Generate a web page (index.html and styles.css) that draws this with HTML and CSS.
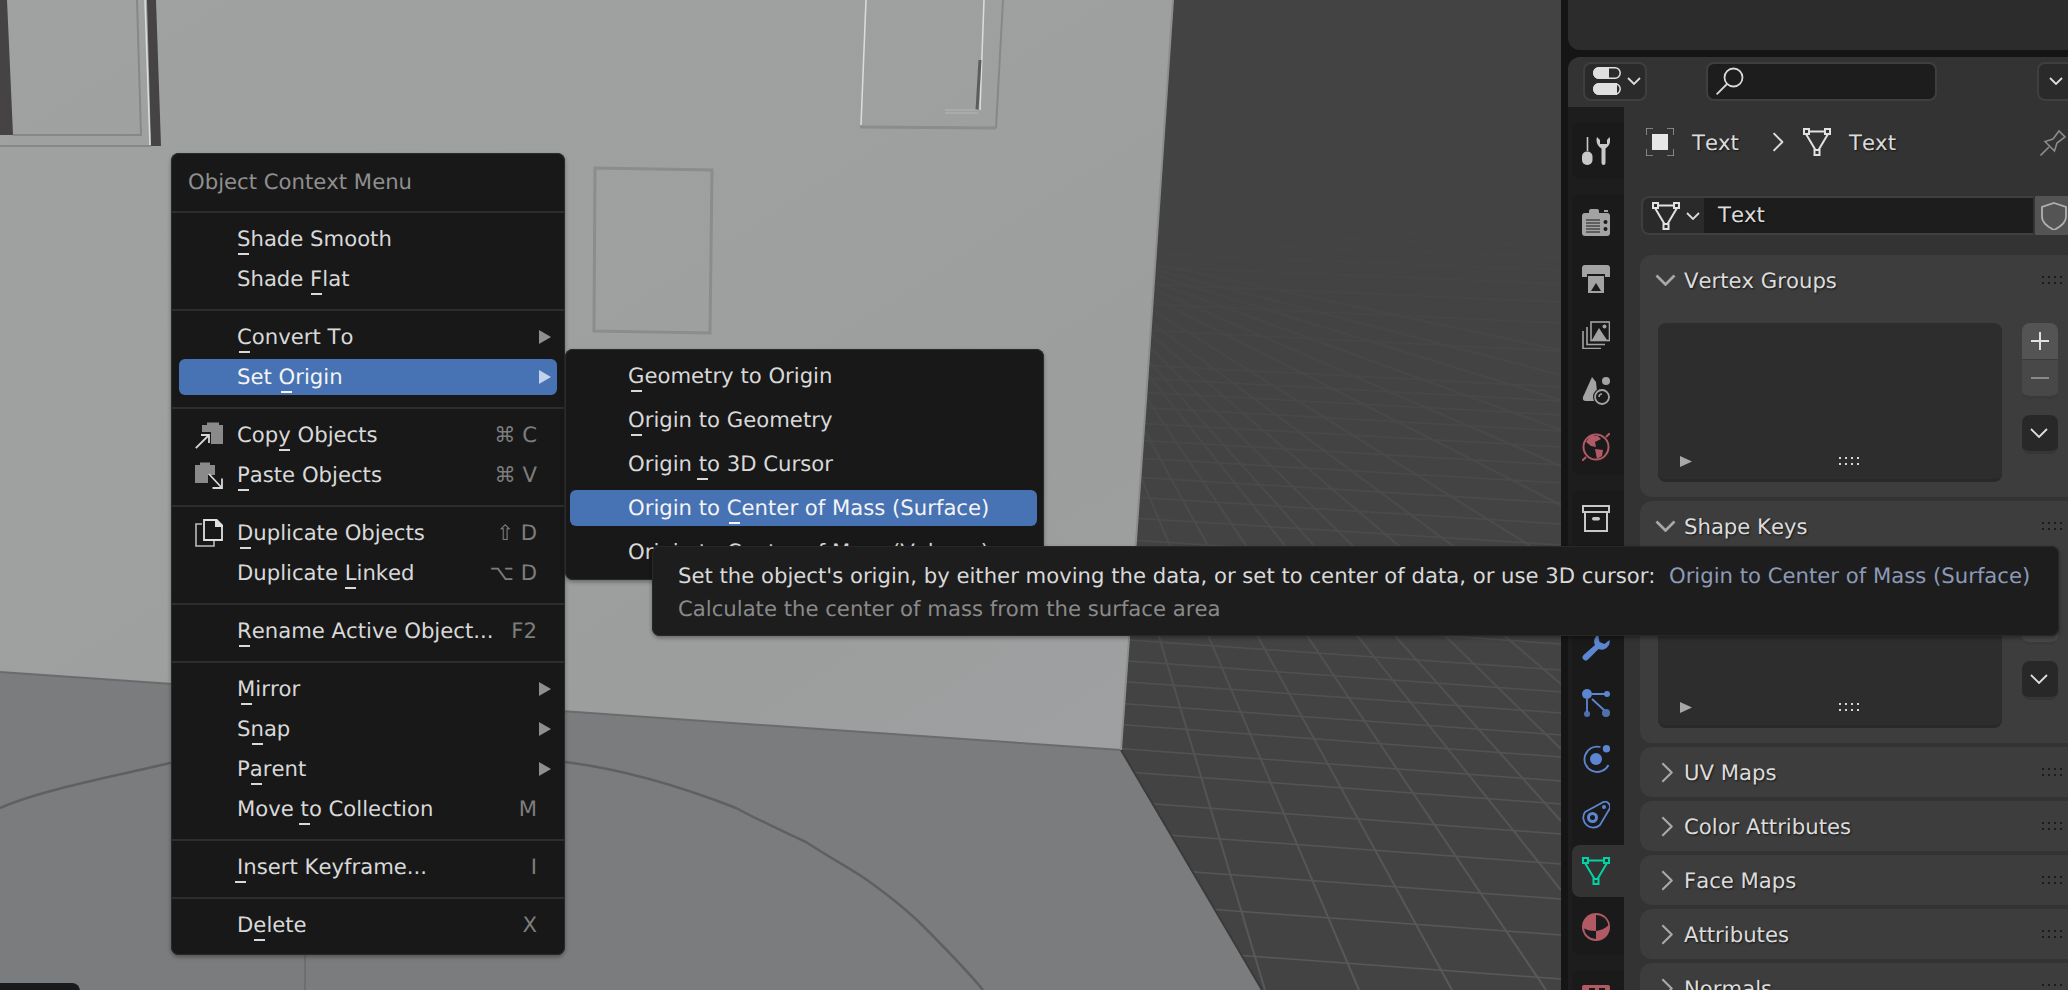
FILE: index.html
```html
<!DOCTYPE html>
<html lang="en">
<head>
<meta charset="utf-8">
<title>Blender context menu</title>
<link rel="stylesheet" href="styles.css">
</head>
<body>
<svg class="sprite" xmlns="http://www.w3.org/2000/svg">
  <symbol id="mesh" viewBox="0 0 28 28"><g fill="none" stroke="currentColor" stroke-width="2"><rect x="1" y="1" width="5" height="5"/><rect x="22" y="1" width="5" height="5"/><rect x="11.5" y="22" width="5" height="5"/><path d="M6 3.5H22M3 6l9.500 16M25 6l-9.500 16"/></g></symbol>
  <symbol id="chev-d" viewBox="0 0 14 8"><path d="M1 1l6 6 6-6" fill="none" stroke="currentColor" stroke-width="1.800"/></symbol>
  <symbol id="chev-r" viewBox="0 0 10 18"><path d="M1 1l8 8-8 8" fill="none" stroke="currentColor" stroke-width="1.800"/></symbol>
  <symbol id="tri" viewBox="0 0 12 14"><path d="M0 0l12 7-12 7z" fill="currentColor"/></symbol>
  <symbol id="grip" viewBox="0 0 20 9"><path d="M0 0h2v2H0zM6 0h2v2H6zM12 0h2v2h-2zM18 0h2v2h-2zM0 6h2v2H0zM6 6h2v2H6zM12 6h2v2h-2zM18 6h2v2h-2z" fill="currentColor"/></symbol>
</svg>

<div class="app">
  <div class="viewport">
    <svg class="scene" viewBox="0 0 1561 990" xmlns="http://www.w3.org/2000/svg">
      <defs>
        <linearGradient id="wallg" x1="0" y1="0" x2="1" y2="1">
          <stop offset="0" stop-color="#a0a2a2"/><stop offset="0.5" stop-color="#9ea0a0"/><stop offset="0.75" stop-color="#9c9e9e"/><stop offset="1" stop-color="#9fa0a1"/>
        </linearGradient>
        <linearGradient id="gridg" gradientUnits="userSpaceOnUse" x1="0" y1="180" x2="0" y2="990">
          <stop offset="0" stop-color="#434343"/><stop offset="0.3" stop-color="#484848"/><stop offset="0.6" stop-color="#505050"/><stop offset="1" stop-color="#595959"/>
        </linearGradient>
      </defs>
      <rect class="sky" width="1561" height="990"/>
      <path class="grid minor" d="M1100 170L1561 178M1100 175L1561 184M1100 180L1561 190M1100 186L1561 196M1100 192L1561 203M1100 198L1561 210M1100 205L1561 218M1100 213L1561 226M1100 222L1561 238M1100 230L1561 246M1100 240L1561 257M1100 252L1561 270M1100 265L1561 284M1100 282L1561 302M1100 302L1561 323M1100 328L1561 351M1100 363L1561 387M1100 376L1561 401M1100 390L1561 415M1100 405L1561 431M1100 421L1561 447M1100 438L1561 465M1100 456L1561 483M1100 475L1561 503M1100 495L1561 524M1100 516L1561 545M1100 538L1561 568M1100 561L1561 591M1100 585L1561 616M1100 612L1561 644M1100 638L1561 670M1100 659L1561 692M1100 680L1561 713M1100 702L1561 735M1100 723L1561 757M1100 747L1561 781M1100 770L1561 804M1100 800L1561 834M1100 830L1561 864M1100 865L1561 899M1100 901L1561 935M1100 945L1561 979"/>
      <path class="grid" d="M1040 240L1265 990M1040 240L1359 990M1040 240L1452 990M1040 240L1546 990M1040 240L1561 890M1040 240L1561 821M1040 240L1561 749M1040 240L1561 684M1040 240L1561 626M1040 240L1561 565M1040 240L1561 505M1040 240L1561 466M1040 240L1561 430M1040 240L1561 400M1040 240L1561 375M1040 240L1561 350"/>
      <polygon class="floor" points="0,672 1121,750 1262,990 0,990"/>
      <polygon class="wall" points="0,0 1173,0 1146,400 1121,750 0,672"/>
      <path class="wall-edge" d="M0 672L1121 750"/>
      <path class="floor-edge" d="M1121 750L1262 990"/>
      <path class="wall-side" d="M1173 0L1146 400 1121 750"/>
      <path class="arc" d="M0 808C40 790 120 775 170 763L565 762C630 770 690 790 736 808C762 822 785 832 806 842C830 858 850 868 867 880C888 895 905 908 922 925C945 948 965 968 983 990"/>
      <path class="arc thin" d="M305 955V990"/>
      <polygon class="frame-dark" points="0,0 7,0 13,135 0,135"/>
      <polygon class="frame-dark" points="147,0 156,0 161,146 151,146"/>
      <path class="frame-white" d="M145 0L150 146"/>
      <path class="frame-line" d="M137 0L141 135 13 135M0 146L151 146"/>
      <path class="frame-line thick" d="M595 168L712 170 710 333 594 331Z"/>
      <path class="frame-line" d="M1003 0L996 128"/>
      <path class="frame-line thick" d="M996 128L860 127"/>
      <path class="frame-white" d="M866 0L861 125"/>
      <path class="frame-white" d="M984 0L980 110"/>
      <path class="frame-deep" d="M980 60L977 110"/>
      <path class="frame-soft" d="M945 110H978M945 113H978"/>
      <rect class="corner-box" x="-10" y="983" width="90" height="20" rx="8"/>
    </svg>
  </div>

  <aside class="side">
    <div class="outliner"></div>
    <section class="props">
      <header class="props-head">
        <div class="btn mode">
          <svg class="i28" viewBox="0 0 28 28"><g fill="none" stroke="#e0e0e0" stroke-width="1.500"><rect x=".8" y=".8" width="26.400" height="10.400" rx="5.200"/><rect x=".8" y="16.800" width="26.400" height="10.400" rx="5.200"/></g><path d="M6 0h10v12H6a6 6 0 0 1 0-12zM6 16h18v12H6a6 6 0 0 1 0-12z" fill="#e0e0e0"/></svg>
          <svg class="chev" viewBox="0 0 14 8"><use href="#chev-d"/></svg>
        </div>
        <div class="btn search">
          <svg class="i28" viewBox="0 0 28 28"><g fill="none" stroke="#d8d8d8" stroke-width="1.800"><circle cx="17.500" cy="10.500" r="9"/><path d="M.6 27.400L11 17"/></g></svg>
        </div>
        <div class="btn opts"><svg class="chev" viewBox="0 0 14 8"><use href="#chev-d"/></svg></div>
      </header>
      <div class="props-body">
        <nav class="tabs">
          <div class="tab-group">
            <div class="tab c-light"><svg class="i28" viewBox="0 0 28 28"><path d="M5.500 0v14" stroke="currentColor" stroke-width="1.600"/><rect y="14.500" width="10.500" height="13.500" rx="5" fill="currentColor"/><path d="M15 0C13.500 5 15.500 9 19.500 11.500V26a2 2 0 0 0 4 0V11.500C27.500 9 29 5 27.500 0L25 3V7H18V3Z" fill="currentColor"/></svg></div>
          </div>
          <div class="tab-group">
            <div class="tab c-gray"><svg class="i28" viewBox="0 0 28 28"><rect y="4" width="28" height="23" rx="3" fill="currentColor"/><rect x="7" y="0" width="10" height="7" rx="2" fill="currentColor"/><rect x="22" y="1" width="4" height="2" fill="currentColor"/><path d="M4 11h14M4 14h14M4 17h14M4 20h14M4 23h14" stroke="#1b1b1b" stroke-width="1.200"/><circle cx="23.500" cy="13" r="2" fill="#1b1b1b"/><circle cx="23.500" cy="20" r="2" fill="#1b1b1b"/></svg></div>
            <div class="tab c-gray"><svg class="i28" viewBox="0 0 28 28"><path d="M3 0h22a3 3 0 0 1 3 3v9h-5V9H5v3H0V3a3 3 0 0 1 3-3z" fill="currentColor"/><path d="M6 11h16v17H6z" fill="currentColor"/><path d="M9 26l5-8 5 8z" fill="#1b1b1b"/></svg></div>
            <div class="tab c-gray"><svg class="i28" viewBox="0 0 28 28"><g fill="none" stroke="currentColor" stroke-width="1.600"><rect x="9" y="1" width="18.500" height="18.500"/><path d="M5 6V23.500H23M1 10V27.500H19"/></g><path d="M10 19l7-12 8 12z" fill="currentColor"/><circle cx="22.500" cy="5.500" r="2" fill="currentColor"/></svg></div>
            <div class="tab c-gray"><svg class="i28" viewBox="0 0 28 28"><path d="M10 0L1 20Q0 24 4 24L16 24 14 5Z" fill="currentColor"/><circle cx="24" cy="4" r="4" fill="currentColor"/><circle cx="20" cy="20" r="9" fill="#1b1b1b"/><circle cx="20" cy="20" r="7" fill="none" stroke="currentColor" stroke-width="1.800"/><path d="M17 20a3 3 0 0 1 3-3" fill="none" stroke="currentColor" stroke-width="1.500"/></svg></div>
            <div class="tab c-red"><svg class="i28" viewBox="0 0 28 28"><circle cx="14" cy="14" r="12.500" fill="none" stroke="currentColor" stroke-width="2"/><path d="M0 28l4-4M24 4l4-4" stroke="currentColor" stroke-width="2"/><path d="M8 3h8l3 3-6 3 1 5-5-1-5-4zM13 16l8 1-1 6-5 3z" fill="currentColor"/></svg></div>
          </div>
          <div class="tab-group">
            <div class="tab c-light"><svg class="i28" viewBox="0 0 28 28"><g fill="none" stroke="currentColor" stroke-width="2"><rect x="1" y="1" width="26" height="6"/><path d="M3 7V26H25V7"/></g><rect x="10" y="12" width="8" height="3.500" rx="1.700" fill="currentColor"/></svg></div>
          </div>
          <div class="tab-group">
            <div class="tab c-gray"></div>
            <div class="tab c-blue"><svg class="i28" viewBox="0 0 28 28"><path d="M17 1a8 8 0 0 0-4 11L1.500 22a3 3 0 0 0 4.500 4.500L16.500 16a8 8 0 0 0 11-9l-5 4-5-2-1-5z" fill="currentColor"/></svg></div>
            <div class="tab c-blue"><svg class="i28" viewBox="0 0 28 28"><circle cx="5" cy="5" r="5" fill="currentColor"/><circle cx="25" cy="5" r="3" fill="currentColor"/><circle cx="5" cy="25" r="3" fill="currentColor" opacity=".8"/><circle cx="24" cy="24" r="4" fill="currentColor" opacity=".8"/><path d="M10 5H23M5 10V23M10 10L22 21" stroke="currentColor" stroke-width="1.800"/></svg></div>
            <div class="tab c-blue"><svg class="i28" viewBox="0 0 28 28"><circle cx="14" cy="14" r="6" fill="currentColor"/><circle cx="24.500" cy="3.700" r="3.700" fill="currentColor"/><path d="M18.500 2A12.700 12.700 0 1 0 26.500 20" fill="none" stroke="currentColor" stroke-width="1.800"/></svg></div>
            <div class="tab c-blue"><svg class="i28" viewBox="0 0 28 28"><path d="M3 11L20 1.800a5 5 0 0 1 7 7L18 24a10 10 0 0 1-15-13z" fill="none" stroke="currentColor" stroke-width="1.800"/><circle cx="10.500" cy="16.500" r="4" fill="none" stroke="currentColor" stroke-width="3"/><circle cx="22" cy="6" r="2" fill="currentColor"/></svg></div>
            <div class="tab tab-active c-green"><svg class="i28" viewBox="0 0 28 28"><use href="#mesh"/></svg></div>
            <div class="tab c-red"><svg class="i28" viewBox="0 0 28 28"><circle cx="14" cy="14" r="14" fill="currentColor"/><path d="M14 2A12 12 0 0 1 26.300 12.500Q21 17 14 18ZM2 15.500Q7 18 14 18V26A12 12 0 0 1 2 15.500Z" fill="#1b1b1b"/></svg></div>
          </div>
          <div class="tab-group">
            <div class="tab c-red"><svg class="i28" viewBox="0 0 28 28"><rect width="28" height="28" rx="2" fill="currentColor"/><path d="M7 3h6v6H7zM17 3h6v6h-6z" fill="#1b1b1b"/></svg></div>
          </div>
        </nav>
        <div class="content">
          <div class="crumbs">
            <svg class="i28" viewBox="0 0 28 28"><path d="M0 7V0h7M21 0h7v7M28 21v7h-7M7 28H0v-7" fill="none" stroke="#9a9a9a" stroke-width="1.600"/><rect x="6" y="6" width="16" height="16" fill="#e6e6e6"/></svg>
            <span class="txt crumb-a">Text</span>
            <svg class="crumb-chev" viewBox="0 0 10 18"><use href="#chev-r"/></svg>
            <svg class="i28 mesh-w" viewBox="0 0 28 28"><use href="#mesh"/></svg>
            <span class="txt crumb-b">Text</span>
            <svg class="i28 pin" viewBox="0 0 28 28"><path d="M.5 27.500L9 19M5 13.500L14.500 23 17 15 25 9 19 3 13 11z" fill="none" stroke="#8c8c8c" stroke-width="1.600"/></svg>
          </div>
          <div class="datarow">
            <div class="db-pick">
              <svg class="i28 mesh-w" viewBox="0 0 28 28"><use href="#mesh"/></svg>
              <svg class="chev" viewBox="0 0 14 8"><use href="#chev-d"/></svg>
            </div>
            <div class="db-name txt">Text</div>
            <div class="db-shield"><svg class="i28" viewBox="0 0 28 28"><path d="M14 1L26 5V15C26 21 20 25 14 28 8 25 2 21 2 15V5Z" fill="none" stroke="#b0b0b0" stroke-width="1.800"/></svg></div>
          </div>

          <section class="panel open">
            <div class="panel-head">
              <svg class="pc-d" viewBox="0 0 14 8"><use href="#chev-d"/></svg>
              <span class="txt">Vertex Groups</span>
              <svg class="p-grip" viewBox="0 0 20 9"><use href="#grip"/></svg>
            </div>
            <div class="panel-body">
              <div class="list">
                <svg class="list-tri" viewBox="0 0 12 14" preserveAspectRatio="none"><use href="#tri"/></svg>
                <svg class="list-grip" viewBox="0 0 20 9"><use href="#grip"/></svg>
              </div>
              <div class="side-btns">
                <div class="pm plus"><svg viewBox="0 0 18 18" class="pm-i"><path d="M9 0v18M0 9h18" stroke="#e0e0e0" stroke-width="2"/></svg></div>
                <div class="pm minus"><svg viewBox="0 0 18 18" class="pm-i"><path d="M0 9h18" stroke="#8a8a8a" stroke-width="2"/></svg></div>
                <div class="menu-btn"><svg viewBox="0 0 18 10" class="mb-i"><path d="M1 1l8 8 8-8" fill="none" stroke="#e0e0e0" stroke-width="1.800"/></svg></div>
              </div>
            </div>
          </section>

          <section class="panel open">
            <div class="panel-head">
              <svg class="pc-d" viewBox="0 0 14 8"><use href="#chev-d"/></svg>
              <span class="txt">Shape Keys</span>
              <svg class="p-grip" viewBox="0 0 20 9"><use href="#grip"/></svg>
            </div>
            <div class="panel-body">
              <div class="list">
                <svg class="list-tri" viewBox="0 0 12 14" preserveAspectRatio="none"><use href="#tri"/></svg>
                <svg class="list-grip" viewBox="0 0 20 9"><use href="#grip"/></svg>
              </div>
              <div class="side-btns">
                <div class="pm plus"></div>
                <div class="pm minus"></div>
                <div class="menu-btn"><svg viewBox="0 0 18 10" class="mb-i"><path d="M1 1l8 8 8-8" fill="none" stroke="#e0e0e0" stroke-width="1.800"/></svg></div>
              </div>
            </div>
          </section>

          <section class="panel"><div class="panel-head"><svg class="pc-r" viewBox="0 0 10 18"><use href="#chev-r"/></svg><span class="txt">UV Maps</span><svg class="p-grip" viewBox="0 0 20 9"><use href="#grip"/></svg></div></section>
          <section class="panel"><div class="panel-head"><svg class="pc-r" viewBox="0 0 10 18"><use href="#chev-r"/></svg><span class="txt">Color Attributes</span><svg class="p-grip" viewBox="0 0 20 9"><use href="#grip"/></svg></div></section>
          <section class="panel"><div class="panel-head"><svg class="pc-r" viewBox="0 0 10 18"><use href="#chev-r"/></svg><span class="txt">Face Maps</span><svg class="p-grip" viewBox="0 0 20 9"><use href="#grip"/></svg></div></section>
          <section class="panel"><div class="panel-head"><svg class="pc-r" viewBox="0 0 10 18"><use href="#chev-r"/></svg><span class="txt">Attributes</span><svg class="p-grip" viewBox="0 0 20 9"><use href="#grip"/></svg></div></section>
          <section class="panel"><div class="panel-head"><svg class="pc-r" viewBox="0 0 10 18"><use href="#chev-r"/></svg><span class="txt">Normals</span><svg class="p-grip" viewBox="0 0 20 9"><use href="#grip"/></svg></div></section>
        </div>
      </div>
    </section>
  </aside>
</div>

<div class="menu main-menu">
  <div class="menu-title">Object Context Menu</div>
  <div class="sep"></div>
  <div class="group">
    <div class="item"><span class="ico"></span><span class="label"><span class="k">S</span>hade Smooth</span></div>
    <div class="item"><span class="ico"></span><span class="label">Shade <span class="k">F</span>lat</span></div>
  </div>
  <div class="sep"></div>
  <div class="group">
    <div class="item"><span class="ico"></span><span class="label"><span class="k">C</span>onvert To</span><svg class="arrow" viewBox="0 0 12 14"><use href="#tri"/></svg></div>
    <div class="item hi"><span class="ico"></span><span class="label">Set <span class="k">O</span>rigin</span><svg class="arrow" viewBox="0 0 12 14"><use href="#tri"/></svg></div>
  </div>
  <div class="sep"></div>
  <div class="group">
    <div class="item"><span class="ico"><svg class="i28" viewBox="0 0 28 28"><path d="M7 4H12V1.500H24V4H28V23H16V11H7Z" fill="#8a8a8a"/><path d="M.8 27.200L13.500 14.500M6 14H14V22" fill="none" stroke="#d8d8d8" stroke-width="1.800"/></svg></span><span class="label">Cop<span class="k">y</span> Objects</span><span class="sc">⌘ C</span></div>
    <div class="item"><span class="ico"><svg class="i28" viewBox="0 0 28 28"><path d="M0 4H5V1.500H15V4H20V14H13V22H0Z" fill="#8a8a8a"/><path d="M14 13L27 27M27 17.500V27H17.500" fill="none" stroke="#d8d8d8" stroke-width="1.800"/></svg></span><span class="label"><span class="k">P</span>aste Objects</span><span class="sc">⌘ V</span></div>
  </div>
  <div class="sep"></div>
  <div class="group">
    <div class="item"><span class="ico"><svg class="i28" viewBox="0 0 28 28"><path d="M7 5H1v22h18v-5" fill="none" stroke="#bcbcbc" stroke-width="1.600"/><path d="M9 1h12l6 6v14H9z" fill="none" stroke="#e0e0e0" stroke-width="1.800"/><path d="M20 0h2l6 6v2h-8z" fill="#e0e0e0"/></svg></span><span class="label"><span class="k">D</span>uplicate Objects</span><span class="sc">⇧ D</span></div>
    <div class="item"><span class="ico"></span><span class="label">Duplicate <span class="k">L</span>inked</span><span class="sc">⌥ D</span></div>
  </div>
  <div class="sep"></div>
  <div class="group">
    <div class="item"><span class="ico"></span><span class="label"><span class="k">R</span>ename Active Object...</span><span class="sc">F2</span></div>
  </div>
  <div class="sep"></div>
  <div class="group">
    <div class="item"><span class="ico"></span><span class="label"><span class="k">M</span>irror</span><svg class="arrow" viewBox="0 0 12 14"><use href="#tri"/></svg></div>
    <div class="item"><span class="ico"></span><span class="label">S<span class="k">n</span>ap</span><svg class="arrow" viewBox="0 0 12 14"><use href="#tri"/></svg></div>
    <div class="item"><span class="ico"></span><span class="label">P<span class="k">a</span>rent</span><svg class="arrow" viewBox="0 0 12 14"><use href="#tri"/></svg></div>
    <div class="item"><span class="ico"></span><span class="label">Move <span class="k">t</span>o Collection</span><span class="sc">M</span></div>
  </div>
  <div class="sep"></div>
  <div class="group">
    <div class="item"><span class="ico"></span><span class="label"><span class="k">I</span>nsert Keyframe...</span><span class="sc">I</span></div>
  </div>
  <div class="sep"></div>
  <div class="group">
    <div class="item"><span class="ico"></span><span class="label">D<span class="k">e</span>lete</span><span class="sc">X</span></div>
  </div>
</div>

<div class="menu sub-menu">
  <div class="sub-item"><span class="k">G</span>eometry to Origin</div>
  <div class="sub-item"><span class="k">O</span>rigin to Geometry</div>
  <div class="sub-item">Origin <span class="k">t</span>o 3D Cursor</div>
  <div class="sub-item hi">Origin to <span class="k">C</span>enter of Mass (Surface)</div>
  <div class="sub-item">Origin to Center of Mass (Volume)</div>
</div>

<div class="tooltip">
  <div class="tip-line">Set the object's origin, by either moving the data, or set to center of data, or use 3D cursor:  <span class="tip-blue">Origin to Center of Mass (Surface)</span></div>
  <div class="tip-line tip-dim">Calculate the center of mass from the surface area</div>
</div>
</body>
</html>
```
FILE: styles.css
```css
* { box-sizing: border-box; }
html, body { margin: 0; padding: 0; width: 2068px; height: 990px; overflow: hidden; background: #151515; }
body { font-family: "DejaVu Sans", sans-serif; font-size: 21.200px; font-kerning: none; color: #d9d9d9; text-rendering: geometricPrecision; position: relative; }
.sprite { display: none; }
svg { display: block; flex: none; }
.i28 { width: 28px; height: 28px; }

.app { display: flex; width: 2068px; height: 990px; }
.viewport { width: 1561px; height: 990px; flex: none; }
.scene { width: 1561px; height: 990px; }
.sky { fill: #434343; }
.wall { fill: url(#wallg); }
.floor { fill: #7b7c7e; }
.wall-edge { stroke: #6a6b6c; stroke-width: 2; fill: none; }
.floor-edge { stroke: #3a3a3a; stroke-width: 2; fill: none; }
.wall-side { stroke: #8c8e8e; stroke-width: 2; fill: none; }
.grid { stroke: url(#gridg); stroke-width: 2; fill: none; }
.grid.minor { stroke-width: 1.500; }
.arc { stroke: #5f6062; stroke-width: 2.500; fill: none; }
.arc.thin { stroke-width: 1; }
.frame-dark { fill: #454343; }
.frame-white { stroke: #dcdcdc; stroke-width: 1.500; fill: none; }
.frame-line { stroke: #85878a; stroke-width: 2; fill: none; }
.frame-line.thick { stroke: #8a8c8d; stroke-width: 3; }
.frame-deep { stroke: #5c5c5c; stroke-width: 3; fill: none; }
.frame-soft { stroke: #b4b5b5; stroke-width: 1; fill: none; }
.corner-box { fill: #1a1a1a; }

.side { width: 507px; flex: none; padding-left: 7px; display: flex; flex-direction: column; background: #151515; }
.outliner { height: 50px; flex: none; margin-bottom: 7px; background: #2c2c2c; border-bottom-left-radius: 12px; }
.props { flex: 1; min-height: 0; display: flex; flex-direction: column; background: #333; border-top-left-radius: 12px; overflow: hidden; }
.props-head { height: 50px; flex: none; display: flex; align-items: center; padding: 0 0 2px 15px; overflow: hidden; }
.btn { height: 39px; flex: none; border: 2px solid #3f3f3f; border-radius: 8px; background: #2a2a2a; display: flex; align-items: center; }
.mode { width: 64px; padding-left: 8px; gap: 6px; margin-right: 59px; }
.chev { width: 14px; height: 8px; color: #dcdcdc; }
.search { width: 231px; background: #1d1d1d; padding-left: 8px; margin-right: 100px; }
.opts { width: 60px; padding-left: 10px; }

.props-body { flex: 1; min-height: 0; display: flex; }
.tabs { width: 56px; flex: none; background: #1d1d1d; padding: 16px 0 0 4px; display: flex; flex-direction: column; gap: 16px; overflow: hidden; }
.tab-group { background: #1a1a1a; border-radius: 8px 0 0 8px; flex: none; }
.tab { height: 56px; display: flex; align-items: center; justify-content: center; padding-right: 4px; }
.tab-active { background: #333; height: 52px; margin: 2px 0; border-radius: 8px 0 0 8px; }
.c-gray { color: #a3a3a3; }
.c-light { color: #c8c8c8; }
.c-red { color: #b15a65; }
.c-blue { color: #5c86d2; }
.c-green { color: #00d4a4; }

.content { flex: 1; min-width: 0; padding-left: 16px; overflow: hidden; }
.txt { color: #dcdcdc; text-shadow: 1px 1px 2px rgba(0,0,0,.65); white-space: nowrap; }
.mesh-w { color: #e2e2e2; }
.crumbs { height: 40px; margin: 15px 0 34px 6px; display: flex; align-items: center; }
.crumb-a { margin-left: 18px; width: 81px; }
.crumb-chev { width: 12px; height: 20px; color: #dcdcdc; margin-right: 19px; }
.crumb-b { margin-left: 18px; width: 193px; }
.datarow { height: 39px; margin: 0 -10px 20px 1px; display: flex; }
.db-pick { width: 63px; flex: none; display: flex; align-items: center; gap: 6px; padding-left: 9px; background: #2a2a2a; border: 2px solid #3f3f3f; border-right: none; border-radius: 8px 0 0 8px; }
.db-name { flex: 1; background: #1d1d1d; border-top: 2px solid #3f3f3f; border-bottom: 2px solid #3f3f3f; padding-left: 14px; line-height: 34px; }
.db-shield { width: 43px; flex: none; margin-left: 2px; background: #545454; display: flex; align-items: center; padding-left: 5px; }

.panel { background: #3d3d3d; border-radius: 12px; margin: 0 -14px 4px 0; }
.panel-head { height: 50px; display: flex; align-items: center; }
.pc-d { width: 21px; height: 12px; margin-left: 15px; margin-right: 8px; color: #a8a8a8; }
.pc-r { width: 12px; height: 21px; margin-left: 21px; margin-right: 11px; color: #a8a8a8; }
.p-grip { width: 20px; height: 9px; margin-left: auto; margin-right: 20px; color: #1c1c1c; }
.panel-body { height: 192px; padding: 18px 36px 0 18px; display: flex; gap: 20px; }
.list { width: 344px; height: 159px; flex: none; background: #2d2d2d; border-radius: 8px; border-bottom: 3px solid #292929; display: flex; align-items: flex-end; padding: 0 0 12px 22px; }
.list-tri { width: 12px; height: 11px; color: #a8a8a8; }
.list-grip { width: 20px; height: 9px; color: #d8d8d8; margin-left: 147px; margin-bottom: 1px; }
.side-btns { width: 36px; flex: none; display: flex; flex-direction: column; }
.pm { height: 37px; display: flex; align-items: center; justify-content: center; }
.plus { background: #545454; border-radius: 8px 8px 0 0; border-bottom: 1px solid #3a3a3a; }
.minus { height: 39px; background: #484848; border-radius: 0 0 8px 8px; border-bottom: 3px solid #3a3a3a; }
.pm-i { width: 18px; height: 18px; }
.menu-btn { height: 39px; margin-top: 16px; background: #282828; border-radius: 8px; border-bottom: 3px solid #363636; display: flex; align-items: center; justify-content: center; }
.mb-i { width: 18px; height: 10px; margin-right: 2px; }

.menu { position: absolute; background: #181818; border-radius: 8px; box-shadow: inset 0 0 0 1px #2a2a2a, 0 2px 4px rgba(0,0,0,.35); }
.main-menu { left: 171px; top: 153px; width: 394px; height: 802px; }
.menu-title { height: 58px; line-height: 58px; padding-left: 17px; color: #8f8f8f; }
.sep { height: 2px; margin: 0 1px; background: #2d2d2d; }
.group { padding: 6px 0 10px; }
.item { height: 40px; display: flex; align-items: center; padding: 0 14px 0 23px; white-space: nowrap; }
.item.hi { height: 36px; margin: 2px 8px; padding: 0 6px 0 15px; background: #4772b3; border-radius: 6px; color: #f4f4f4; }
.ico { width: 28px; height: 28px; flex: none; margin: 0 14px 0 1px; }
.label { flex: 1; min-width: 0; margin-top: -1px; }
.sc { color: #7d7d7d; margin-right: 14px; margin-top: -1px; }
.arrow { width: 12px; height: 14px; color: #8f8f8f; }
.hi .arrow { color: #c2d2ea; }
.k { position: relative; }
.k::after { content: ""; position: absolute; left: 50%; bottom: -4px; width: 11px; height: 2px; margin-left: -5.500px; background: currentColor; }

.sub-menu { left: 565px; top: 349px; width: 479px; height: 231px; padding-top: 5px; }
.sub-item { height: 44px; line-height: 44px; padding-left: 63px; white-space: nowrap; }
.sub-item.hi { height: 36px; line-height: 36px; margin: 4px 7px 4px 5px; padding-left: 58px; background: #4772b3; border-radius: 6px; color: #f4f4f4; }

.tooltip { position: absolute; left: 652px; top: 546px; width: 1407px; height: 90px; padding: 13px 0 0 26px; background: #1d1d1d; border-radius: 8px; box-shadow: inset 0 0 0 1px #282828, 0 2px 4px rgba(0,0,0,.35); }
.tip-line { height: 33px; line-height: 33px; white-space: pre; }
.tip-blue { color: #8c9ab8; }
.tip-dim { color: #8a8a8a; }
```
